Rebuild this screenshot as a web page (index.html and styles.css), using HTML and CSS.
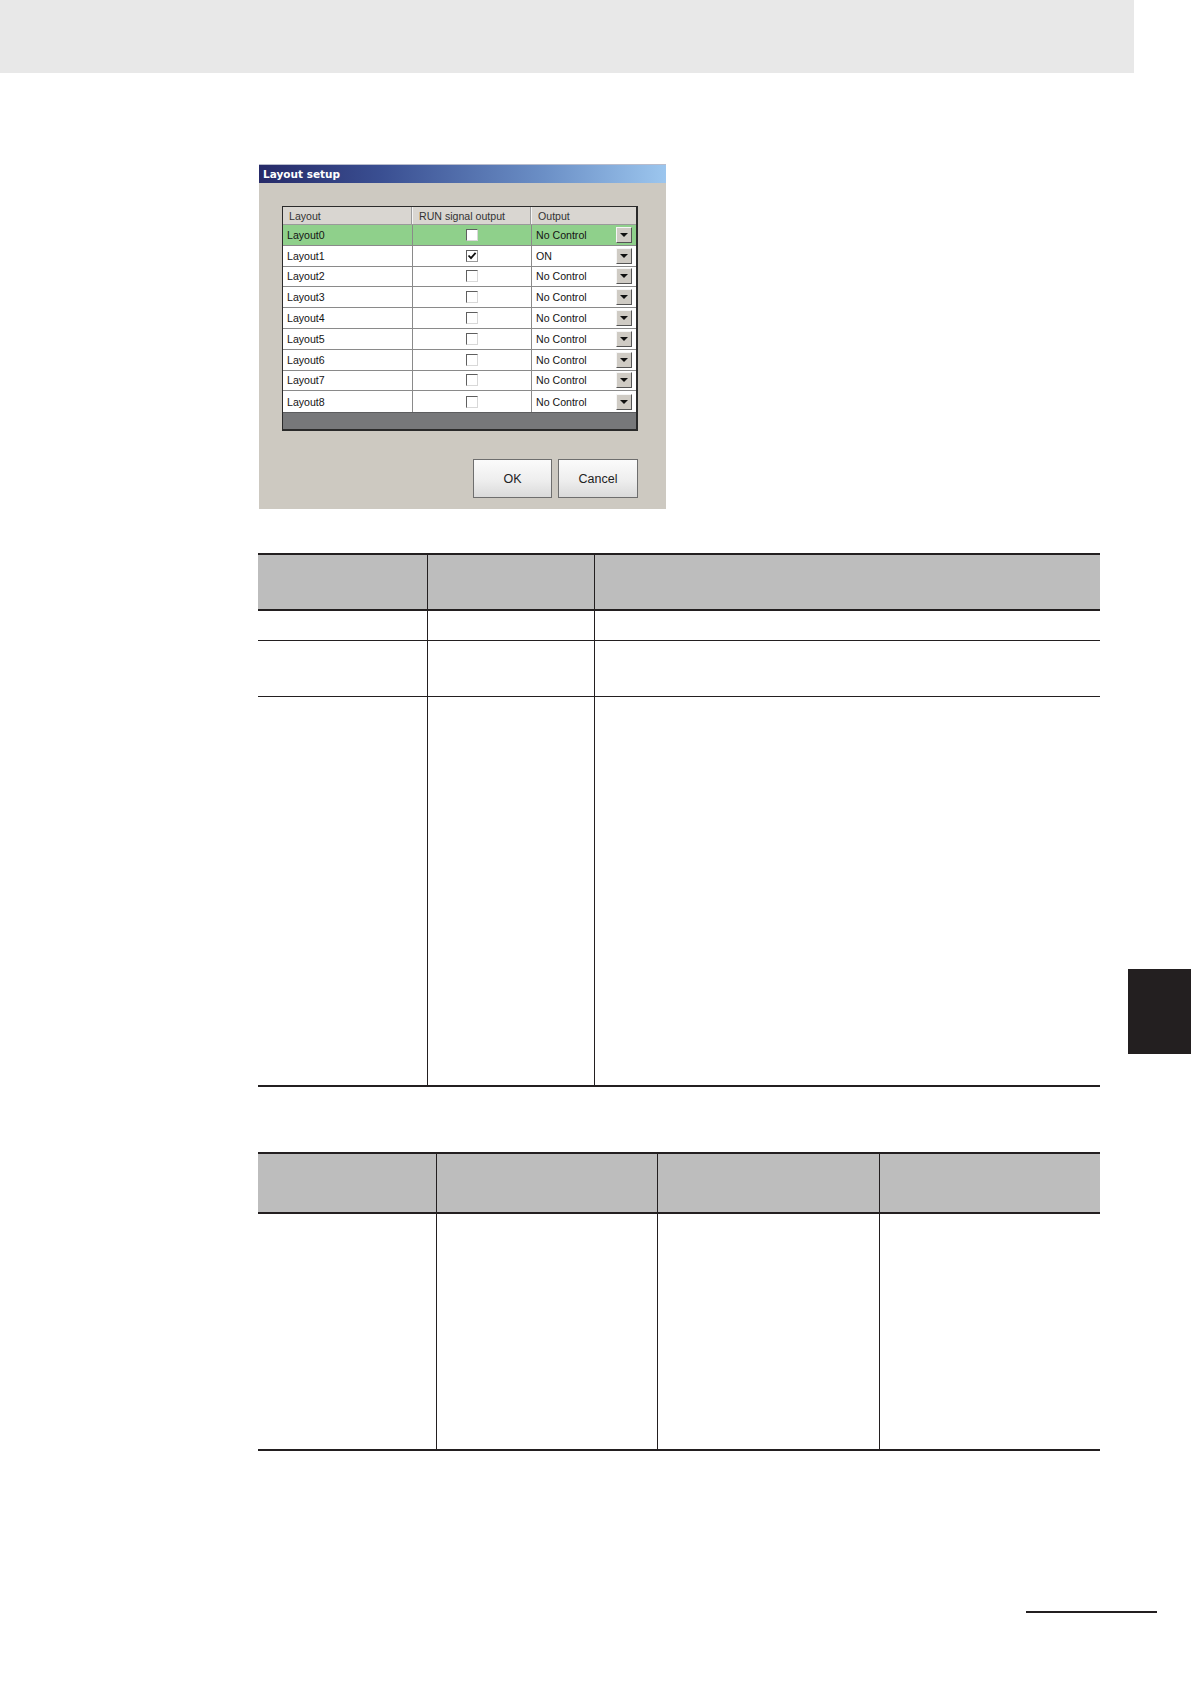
FILE: index.html
```html
<!DOCTYPE html>
<html>
<head>
<meta charset="utf-8">
<title>Layout setup</title>
<link rel="stylesheet" href="styles.css">
</head>
<body>
<div class="page">
  <div class="page-header"></div>

  <div class="content">
    <div class="dialog">
      <div class="dialog-title">Layout setup</div>
      <div class="dialog-body">
        <div class="grid">
          <div class="grid-row grid-head">
            <div class="gc gc-name">Layout</div>
            <div class="gc gc-run">RUN signal output</div>
            <div class="gc gc-out">Output</div>
          </div>
          <div class="grid-row selected">
            <div class="gc gc-name">Layout0</div>
            <div class="gc gc-run"><span class="chk"></span></div>
            <div class="gc gc-out"><span class="val">No Control</span><span class="drop"><span class="tri"></span></span></div>
          </div>
          <div class="grid-row">
            <div class="gc gc-name">Layout1</div>
            <div class="gc gc-run"><span class="chk checked"><svg viewBox="0 0 10 10" width="10" height="10"><path d="M1.5 4.5 L4 7.2 L8.6 1.8" fill="none" stroke="#111" stroke-width="1.8"/></svg></span></div>
            <div class="gc gc-out"><span class="val">ON</span><span class="drop"><span class="tri"></span></span></div>
          </div>
          <div class="grid-row">
            <div class="gc gc-name">Layout2</div>
            <div class="gc gc-run"><span class="chk"></span></div>
            <div class="gc gc-out"><span class="val">No Control</span><span class="drop"><span class="tri"></span></span></div>
          </div>
          <div class="grid-row">
            <div class="gc gc-name">Layout3</div>
            <div class="gc gc-run"><span class="chk"></span></div>
            <div class="gc gc-out"><span class="val">No Control</span><span class="drop"><span class="tri"></span></span></div>
          </div>
          <div class="grid-row">
            <div class="gc gc-name">Layout4</div>
            <div class="gc gc-run"><span class="chk"></span></div>
            <div class="gc gc-out"><span class="val">No Control</span><span class="drop"><span class="tri"></span></span></div>
          </div>
          <div class="grid-row">
            <div class="gc gc-name">Layout5</div>
            <div class="gc gc-run"><span class="chk"></span></div>
            <div class="gc gc-out"><span class="val">No Control</span><span class="drop"><span class="tri"></span></span></div>
          </div>
          <div class="grid-row">
            <div class="gc gc-name">Layout6</div>
            <div class="gc gc-run"><span class="chk"></span></div>
            <div class="gc gc-out"><span class="val">No Control</span><span class="drop"><span class="tri"></span></span></div>
          </div>
          <div class="grid-row">
            <div class="gc gc-name">Layout7</div>
            <div class="gc gc-run"><span class="chk"></span></div>
            <div class="gc gc-out"><span class="val">No Control</span><span class="drop"><span class="tri"></span></span></div>
          </div>
          <div class="grid-row last">
            <div class="gc gc-name">Layout8</div>
            <div class="gc gc-run"><span class="chk"></span></div>
            <div class="gc gc-out"><span class="val">No Control</span><span class="drop"><span class="tri"></span></span></div>
          </div>
          <div class="grid-empty"></div>
        </div>
        <div class="buttons">
          <button class="btn btn-ok">OK</button>
          <button class="btn btn-cancel">Cancel</button>
        </div>
      </div>
    </div>

    <table class="spec spec1">
      <colgroup>
        <col class="c1a"><col class="c1b"><col class="c1c">
      </colgroup>
      <thead>
        <tr class="h1"><th></th><th></th><th></th></tr>
      </thead>
      <tbody>
        <tr class="r1"><td></td><td></td><td></td></tr>
        <tr class="r2"><td></td><td></td><td></td></tr>
        <tr class="r3"><td></td><td></td><td></td></tr>
      </tbody>
    </table>

    <table class="spec spec2">
      <colgroup>
        <col class="c2a"><col class="c2b"><col class="c2c"><col class="c2d">
      </colgroup>
      <thead>
        <tr class="h2"><th></th><th></th><th></th><th></th></tr>
      </thead>
      <tbody>
        <tr class="r4"><td></td><td></td><td></td><td></td></tr>
      </tbody>
    </table>

    <div class="footer-rule"></div>
  </div>

  <div class="thumb-tab"></div>
</div>
</body>
</html>
```

FILE: styles.css
```css
html, body {
  margin: 0;
  padding: 0;
  background: #ffffff;
}

.page {
  position: relative;
  width: 1191px;
  min-height: 1684px;
  font-family: "Liberation Sans", Arial, sans-serif;
}

.page-header {
  width: 1134px;
  height: 73px;
  background: #e8e8e8;
}

.content {
  padding-left: 258px;
  display: flex;
  flex-direction: column;
  align-items: flex-start;
}

/* ---------- dialog ---------- */
.dialog {
  margin-top: 91px;
  margin-left: 1px;
  width: 407px;
  background: #cdc9c1;
}

.dialog-title {
  height: 19px;
  line-height: 19px;
  padding-left: 4px;
  font-family: "DejaVu Sans", Verdana, sans-serif;
  font-weight: bold;
  font-size: 10.5px;
  color: #ffffff;
  background: linear-gradient(to right, #262a68 0%, #3a4f92 30%, #6b8fc6 70%, #9cc6ee 100%);
  border-top: 1px solid #b8bccc;
  box-sizing: border-box;
}

.dialog-body {
  padding: 23px 28px 11px 23px;
  display: flex;
  flex-direction: column;
}

.grid {
  width: 356px;
  box-sizing: border-box;
  border: 1px solid #2a2a2a;
  border-right-width: 2px;
  border-bottom-width: 2px;
  background: #77787a;
  font-size: 10.6px;
}

.grid-row {
  display: grid;
  grid-template-columns: 130px 119px 1fr;
  height: 20.8px;
  background: #ffffff;
  border-bottom: 1px solid #8a8a8a;
  box-sizing: border-box;
}

.grid-row.last {
  border-bottom: none;
}

.grid-row.selected {
  background: #8fd08b;
}

.grid-head {
  height: 18px;
  background: #d9d6d1;
  color: #333333;
  border-bottom: 1px solid #9a9a9a;
}

.gc {
  display: flex;
  align-items: center;
  padding-left: 4px;
  border-right: 1px solid #8a8a8a;
  color: #141414;
  white-space: nowrap;
  overflow: hidden;
}

.gc-out {
  border-right: none;
  justify-content: space-between;
  padding-right: 4px;
}

.gc-run {
  justify-content: center;
  padding-left: 0;
}

.grid-head .gc {
  padding-left: 6px;
  color: #333333;
  border-right: 1px solid #f4f4f4;
  box-shadow: inset -1px 0 0 #9c9c9c;
  justify-content: flex-start;
}

.grid-head .gc-run {
  padding-left: 6px;
}

.grid-head .gc-out {
  border-right: none;
  box-shadow: none;
}

.chk {
  width: 12px;
  height: 12px;
  box-sizing: border-box;
  background: #ffffff;
  border-top: 1px solid #5f5f5f;
  border-left: 1px solid #5f5f5f;
  border-right: 1px solid #d8d8d8;
  border-bottom: 1px solid #d8d8d8;
  display: flex;
  align-items: center;
  justify-content: center;
}

.chk.checked {
  border-right-color: #9a9a9a;
  border-bottom-color: #9a9a9a;
}

.drop {
  width: 16px;
  height: 16px;
  box-sizing: border-box;
  background: #cfcbc4;
  border-top: 1px solid #f6f6f6;
  border-left: 1px solid #f6f6f6;
  border-right: 1px solid #555555;
  border-bottom: 1px solid #555555;
  display: flex;
  align-items: center;
  justify-content: center;
}

.tri {
  width: 0;
  height: 0;
  border-left: 4px solid transparent;
  border-right: 4px solid transparent;
  border-top: 4px solid #111111;
}

.grid-empty {
  height: 16px;
  background: #77787a;
  border-top: 1px solid #5c5d5f;
}

.buttons {
  margin-top: 28px;
  display: flex;
  justify-content: flex-end;
  gap: 6px;
  width: 356px;
}

.btn {
  height: 39px;
  box-sizing: border-box;
  border: 1px solid #6e6e6e;
  border-radius: 0;
  background: linear-gradient(to bottom, #fbfbfb 0%, #eeeeee 55%, #dadada 100%);
  font-family: "Liberation Sans", Arial, sans-serif;
  font-size: 12.5px;
  color: #222222;
  padding: 0;
}

.btn-ok {
  width: 79px;
}

.btn-cancel {
  width: 80px;
}

/* ---------- spec tables ---------- */
.spec {
  border-collapse: collapse;
  width: 842px;
  table-layout: fixed;
  border-top: 2px solid #231f20;
  border-bottom: 2px solid #231f20;
}

.spec th {
  background: #bdbdbd;
  border-bottom: 2px solid #231f20;
  padding: 0;
}

.spec td {
  padding: 0;
  border-bottom: 1px solid #231f20;
}

.spec th + th,
.spec td + td {
  border-left: 1px solid #231f20;
}

.spec1 {
  margin-top: 44px;
}

.c1a { width: 169px; }
.c1b { width: 167px; }
.c1c { width: 506px; }

.spec1 .h1 th { height: 54px; }
.spec1 .r1 td { height: 29px; }
.spec1 .r2 td { height: 55px; }
.spec1 .r3 td { height: 388px; border-bottom: none; }

.spec2 {
  margin-top: 65px;
}

.c2a { width: 178px; }
.c2b { width: 221px; }
.c2c { width: 222px; }
.c2d { width: 221px; }

.spec2 .h2 th { height: 58px; }
.spec2 .r4 td { height: 235px; border-bottom: none; }

.footer-rule {
  margin-top: 160px;
  margin-left: 768px;
  width: 131px;
  height: 2px;
  background: #231f20;
}

.thumb-tab {
  position: absolute;
  left: 1128px;
  top: 969px;
  width: 63px;
  height: 85px;
  background: #231f20;
}
```
